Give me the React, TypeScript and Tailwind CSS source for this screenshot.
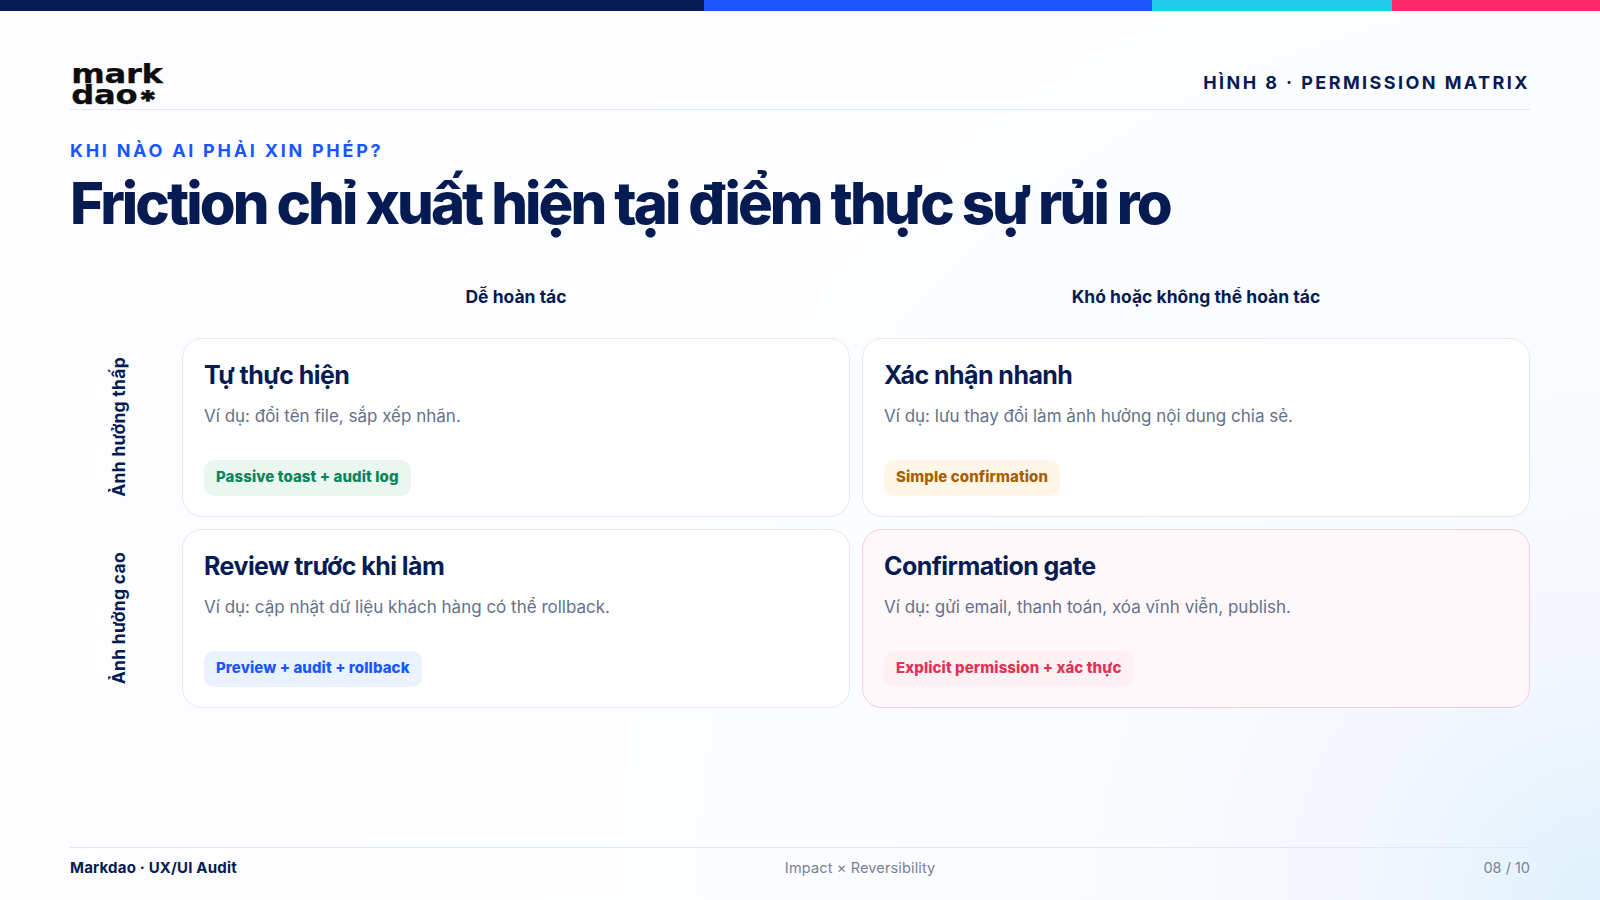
import React from "react";

const font = "font-['Inter','Noto_Sans',sans-serif]";

function Card({ title, desc, pill, pillCls, cardCls }: { title: string; desc: string; pill: string; pillCls: string; cardCls: string }) {
  return (
    <div className={`flex h-[178.5px] flex-col rounded-[20px] border px-[21px] pt-[19px] ${cardCls}`}>
      <h3 className="text-[25px] font-bold leading-[34px] tracking-[-0.022em] text-[#061b52]">{title}</h3>
      <p className="mt-[10.5px] text-[17px] leading-[26px] text-[#667089]">{desc}</p>
      <div className="mt-[31px] flex">
        <span className={`flex h-[36px] items-center rounded-[10px] px-[12px] text-[15px] font-extrabold tracking-[0.006em] ${pillCls}`}>{pill}</span>
      </div>
    </div>
  );
}

function Side({ children }: { children: React.ReactNode }) {
  return (
    <div className="flex items-center justify-center">
      <span className="-translate-x-[1px] rotate-180 text-[17.5px] font-bold tracking-[0.016em] text-[#061b52] [writing-mode:vertical-rl]">{children}</span>
    </div>
  );
}

export default function App() {
  return (
    <div className={`flex h-[900px] w-[1600px] flex-col overflow-hidden bg-[radial-gradient(circle_at_100%_100%,#dff2fd_0%,#f2f6fe_12%,#f9fbff_25%,#fcfdff_50%,#fdfdff_100%)] ${font}`}>
      <div className="flex h-[11px] shrink-0">
        <div className="w-[704px] bg-[#061b52]" />
        <div className="w-[448px] bg-[#1a56ff]" />
        <div className="w-[240px] bg-[#20cbeb]" />
        <div className="w-[208px] bg-[#ff2a6d]" />
      </div>
      <div className="flex flex-1 flex-col px-[70px]">
        <header className="flex h-[99px] items-end justify-between border-b border-[#e3e7f0] pb-[3px]">
          <div className="origin-left scale-x-[1.24] pl-[1px] font-['DejaVu_Sans',sans-serif] text-[26px] font-bold leading-[21px] tracking-[-0.01em] text-[#0d0d0d] [-webkit-text-stroke:0.25px_#0d0d0d]">
            <div>mark</div>
            <div>
              dao
              <span className="inline-block translate-y-[7px] font-['Inter',sans-serif] text-[28px] font-black leading-[10px]">*</span>
            </div>
          </div>
          <div className="pb-[10px] text-[18px] font-bold leading-[26px] tracking-[0.135em] text-[#061b52]">HÌNH 8 · PERMISSION MATRIX</div>
        </header>
        <div className="mt-[30px] text-[18px] font-bold leading-[22px] tracking-[0.152em] text-[#1a56ff]">KHI NÀO AI PHẢI XIN PHÉP?</div>
        <h1 className="mt-[5px] text-[58px] font-extrabold leading-[72px] tracking-[-0.05em] text-[#061b52]">Friction chỉ xuất hiện tại điểm thực sự rủi ro</h1>
        <div className="mt-[45px] grid grid-cols-[100px_1fr_1fr] gap-x-[12px] gap-y-[12.5px]">
          <div />
          <div className="pb-[15.5px] text-center text-[17.5px] font-bold leading-[26px] text-[#061b52]">Dễ hoàn tác</div>
          <div className="pb-[15.5px] text-center text-[17.5px] font-bold leading-[26px] text-[#061b52]">Khó hoặc không thể hoàn tác</div>
          <Side>Ảnh hưởng thấp</Side>
          <Card title="Tự thực hiện" desc="Ví dụ: đổi tên file, sắp xếp nhãn." pill="Passive toast + audit log" pillCls="bg-[#eaf7f1] text-[#0b8457]" cardCls="border-[#e3e8f2] bg-white" />
          <Card title="Xác nhận nhanh" desc="Ví dụ: lưu thay đổi làm ảnh hưởng nội dung chia sẻ." pill="Simple confirmation" pillCls="bg-[#fff6e8] text-[#a85f00]" cardCls="border-[#e3e8f2] bg-white" />
          <Side>Ảnh hưởng cao</Side>
          <Card title="Review trước khi làm" desc="Ví dụ: cập nhật dữ liệu khách hàng có thể rollback." pill="Preview + audit + rollback" pillCls="bg-[#ebf2ff] text-[#1a56ff]" cardCls="border-[#e3e8f2] bg-white" />
          <Card title="Confirmation gate" desc="Ví dụ: gửi email, thanh toán, xóa vĩnh viễn, publish." pill="Explicit permission + xác thực" pillCls="bg-[#fff0f3] text-[#df3358]" cardCls="border-[#f5cdd8] bg-[#fff8fa]" />
        </div>
        <footer className="mt-auto mb-[21px] flex h-[32px] items-end justify-between border-t border-[#e3e7f0] text-[14.5px] leading-[22px]">
          <span className="text-[15px] font-bold tracking-[0.012em] text-[#061b52]">Markdao · UX/UI Audit</span>
          <span className="tracking-[0.01em] text-[#778198]">Impact × Reversibility</span>
          <span className="text-[#778198]">08 / 10</span>
        </footer>
      </div>
    </div>
  );
}
